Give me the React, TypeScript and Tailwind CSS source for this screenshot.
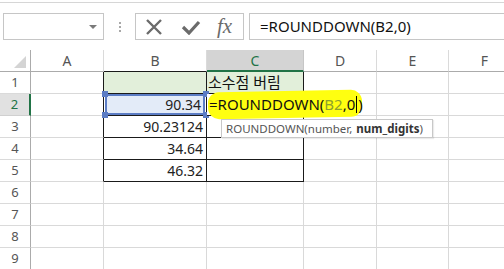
import React from 'react'

const cols = [
  { key: 'A', w: 'w-[73px]' },
  { key: 'B', w: 'w-[103px]' },
  { key: 'C', w: 'w-[97px]' },
  { key: 'D', w: 'w-[73px]' },
  { key: 'E', w: 'w-[72px]' },
  { key: 'F', w: 'w-[72px]' },
]

const values: Record<number, string> = { 2: '90.34', 3: '90.23124', 4: '34.64', 5: '46.32' }

const font = "font-['Noto_Sans','Noto_Sans_CJK_KR',sans-serif]"

function Handle({ pos }: { pos: string }) {
  return <span className={`absolute w-[6px] h-[6px] bg-[#5b7cc4] ${pos}`} />
}

function Cell({ row, col, w }: { row: number; col: string; w: string }) {
  const inTable = row >= 1 && row <= 5
  let border = 'border-r border-b border-[#d9d9d9]'
  if (inTable && (col === 'B' || col === 'C')) border = 'border-r border-b border-[#1a1a1a]'
  if (inTable && col === 'A') border = 'border-r border-b border-r-[#1a1a1a] border-b-[#d9d9d9]'

  let bg = 'bg-white'
  if (row === 1 && (col === 'B' || col === 'C')) bg = 'bg-[#e2efda]'

  // B2: referenced range, blue outline + corner handles
  if (row === 2 && col === 'B') {
    return (
      <div className={`${w} h-[22px] shrink-0 ${border} relative bg-white`}>
        <div className="absolute inset-x-[1px] inset-y-0 border-2 border-[#5b7cc4] bg-[#e3ebf8] flex items-center justify-end pr-[2px] text-[14px] text-[#222]">
          {values[2]}
        </div>
        <Handle pos="-left-[2px] -top-[3px]" />
        <Handle pos="-right-[3px] -top-[3px]" />
        <Handle pos="-left-[2px] -bottom-[3px]" />
        <Handle pos="-right-[3px] -bottom-[3px]" />
      </div>
    )
  }

  // C2: cell in edit mode, hand-drawn yellow marker over it
  if (row === 2 && col === 'C') {
    return (
      <div className={`${w} h-[22px] shrink-0 ${border} relative z-10 bg-white`}>
        <div className="absolute left-[1px] -top-[3px] w-[154px] h-[27px] rounded-[11px] bg-[#ffff10] -rotate-[1deg]" />
        <div className="absolute left-[2px] top-0 h-full flex items-center text-[15px] text-[#111] whitespace-nowrap">
          <span>=ROUNDDOWN(</span>
          <span className="text-[#8da12c]">B2</span>
          <span>,0</span>
          <span className="inline-block w-[1px] h-[17px] bg-black mx-[1px]" />
          <span>)</span>
        </div>
        <div className="absolute left-[14px] top-[25px] z-20 w-[212px] h-[19px] bg-white border border-[#c8c8c8] shadow-[1px_1px_1px_rgba(0,0,0,0.08)] flex items-center pl-[4px] text-[11.5px] text-[#555] whitespace-nowrap">
          ROUNDDOWN(number, <span className="font-bold text-[#333] ml-[4px]">num_digits</span>)
        </div>
      </div>
    )
  }

  return (
    <div className={`${w} h-[22px] shrink-0 ${border} ${bg} flex items-center`}>
      {row === 1 && col === 'C' && (
        <span className="pl-[1px] text-[15px] text-[#111] whitespace-nowrap">소수점 버림</span>
      )}
      {col === 'B' && values[row] && (
        <span className="ml-auto pr-[3px] text-[14px] text-[#222]">{values[row]}</span>
      )}
    </div>
  )
}

function ColHeader({ col, w }: { col: string; w: string }) {
  if (col === 'C') {
    return (
      <div className={`${w} h-[22px] shrink-0 bg-[#d4d4d4] border-r border-[#c6c6c6] border-b-2 border-b-[#217346] flex items-center justify-center text-[14px] text-[#217346]`}>
        {col}
      </div>
    )
  }
  const bottom = col === 'B' ? 'border-b-[#1a1a1a]' : 'border-b-[#ababab]'
  return (
    <div className={`${w} h-[22px] shrink-0 bg-white border-r border-b border-r-[#dadada] ${bottom} flex items-center justify-center text-[14px] text-[#555]`}>
      {col}
    </div>
  )
}

function RowHeader({ row }: { row: number }) {
  if (row === 2) {
    return (
      <div className="w-[31px] h-[22px] shrink-0 bg-[#e1e1e1] border-b border-[#d0d0d0] border-r-2 border-r-[#217346] flex items-center justify-center text-[13px] text-[#217346]">
        {row}
      </div>
    )
  }
  return (
    <div className="w-[31px] h-[22px] shrink-0 bg-white border-b border-r border-b-[#dadada] border-r-[#ababab] flex items-center justify-center text-[13px] text-[#555]">
      {row}
    </div>
  )
}

export default function App() {
  const rows = [1, 2, 3, 4, 5, 6, 7, 8, 9]

  return (
    <main className={`w-[504px] h-[269px] overflow-hidden bg-white ${font}`}>
      {/* FORMULA BAR */}
      <div className="h-[50px] pt-[2px]">
        <div className="border-t border-[#d6d6d6] pt-[10px] flex items-stretch h-[38px]">
          <div className="ml-[3px] w-[101px] h-[27px] border border-[#c6c6c6] bg-white flex items-center justify-end pr-[6px]">
            <span className="w-0 h-0 border-l-[4px] border-r-[4px] border-t-[4px] border-l-transparent border-r-transparent border-t-[#7a7a7a]" />
          </div>
          <div className="w-[31px] h-[27px] flex flex-col items-center justify-center gap-[2px]">
            <span className="w-[2px] h-[2px] bg-[#a8a8a8]" />
            <span className="w-[2px] h-[2px] bg-[#a8a8a8]" />
            <span className="w-[2px] h-[2px] bg-[#a8a8a8]" />
          </div>
          <div className="w-[109px] h-[27px] border border-[#c6c6c6] bg-white flex items-center">
            <svg width="18" height="16" viewBox="0 0 18 16" className="ml-[9px]">
              <path d="M2 1 L16 15 M16 1 L2 15" stroke="#6b6b6b" strokeWidth="2.4" fill="none" />
            </svg>
            <svg width="20" height="16" viewBox="0 0 20 16" className="ml-[18px]">
              <path d="M2 8 L8 14 L18 3" stroke="#6b6b6b" strokeWidth="3.2" fill="none" strokeLinejoin="miter" />
            </svg>
            <span className="ml-[16px] font-['Liberation_Serif',serif] italic text-[21px] leading-none text-[#6b6b6b]">fx</span>
          </div>
          <div className="ml-[5px] flex-1 h-[27px] border border-r-0 border-[#c6c6c6] bg-white flex items-center pl-[10px] text-[15px] text-[#111] whitespace-nowrap">
            =ROUNDDOWN(B2,0)
          </div>
        </div>
      </div>

      {/* COLUMN HEADERS */}
      <div className="flex">
        <div className="w-[31px] h-[22px] shrink-0 bg-white border-r border-b border-[#ababab] flex items-end justify-end pr-[4px] pb-[3px]">
          <svg width="12" height="12" viewBox="0 0 12 12">
            <polygon points="12,0 12,12 0,12" fill="#d4d4d4" />
          </svg>
        </div>
        {cols.map((c) => (
          <ColHeader key={c.key} col={c.key} w={c.w} />
        ))}
      </div>

      {/* GRID */}
      {rows.map((r) => (
        <div key={r} className="flex">
          <RowHeader row={r} />
          {cols.map((c) => (
            <Cell key={c.key} row={r} col={c.key} w={c.w} />
          ))}
        </div>
      ))}
    </main>
  )
}
